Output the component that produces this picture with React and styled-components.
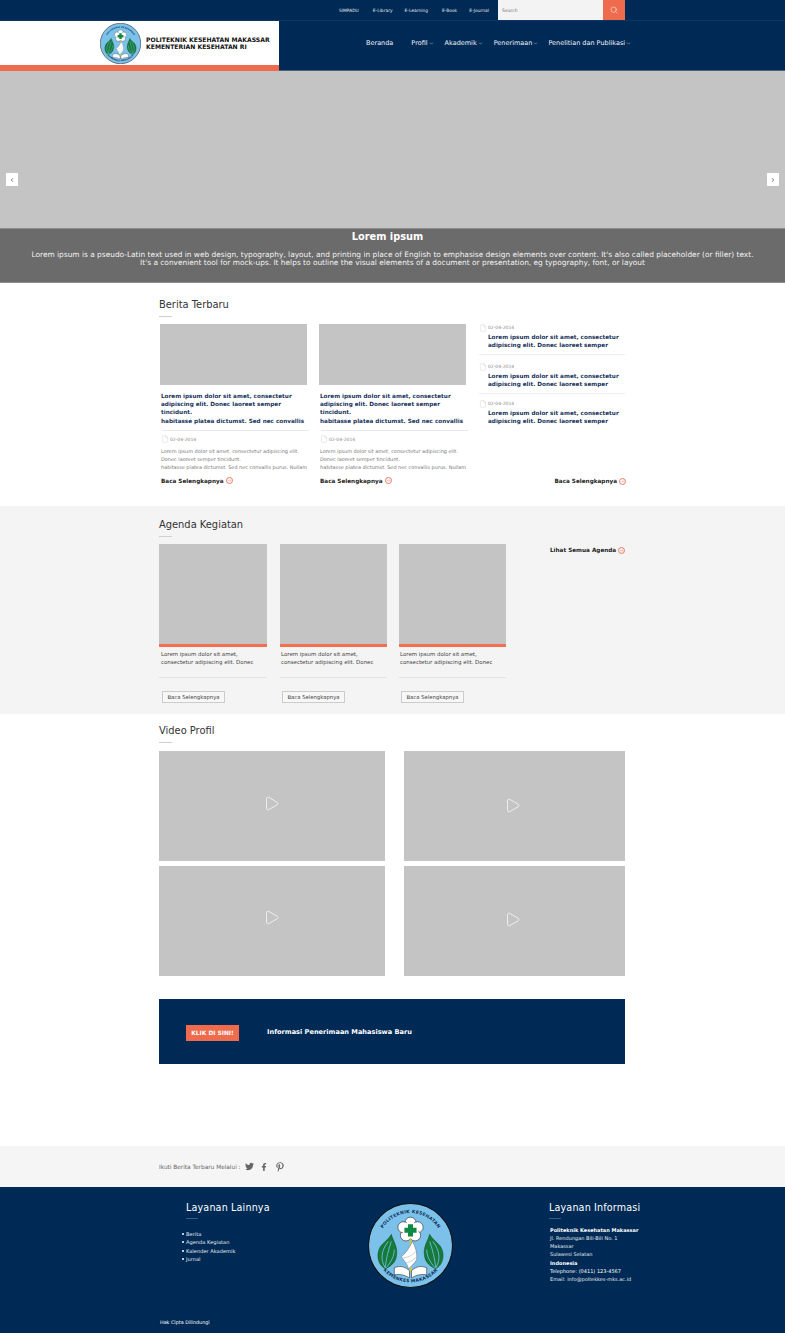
import React from "react";
import styled, { createGlobalStyle } from "styled-components";
import { ChevronDown, ChevronLeft, ChevronRight, Search, Play, File, ArrowRight } from "lucide-react";
import { FaTwitter, FaFacebookF, FaPinterestP } from "react-icons/fa";

const Global = createGlobalStyle`
  html, body { margin: 0; padding: 0; background: #fff; }
  body { font-family: "DejaVu Sans", Verdana, sans-serif; color: #333; }
  * { box-sizing: border-box; }
`;
const NAVY = "#002a56";
const ORANGE = "#ee6b4d";

const Page = styled.div`width: 785px; height: 1333px; overflow: hidden; display: flex; flex-direction: column;`;
const TopBar = styled.div`height: 21px; background: ${NAVY}; border-bottom: 1px solid #0e3560; display: flex; align-items: flex-start; padding-left: 339px;`;
const TopLinks = styled.nav`display: flex; height: 20px; align-items: center; gap: 12px; width: 159px;`;
const TopLink = styled.span`font-size: 4.4px; color: #e4e9ee; white-space: nowrap; &:first-child, &:nth-child(3) { margin-right: 2px; }`;
const SearchBox = styled.div`display: flex; width: 127px; height: 20px;`;
const SearchInput = styled.div`flex: 1; background: #f3f3f3; font-size: 4.6px; color: #777; padding: 8px 0 0 4px;`;
const SearchBtn = styled.div`width: 22px; background: ${ORANGE}; display: flex; align-items: center; justify-content: center; color: #fff;`;

const Header = styled.header`height: 50px; background: ${NAVY}; display: flex;`;
const Brand = styled.div`width: 279px; background: #fff; border-bottom: 6px solid ${ORANGE}; display: flex; align-items: center; padding: 0 0 0 100px; gap: 5px;`;
const BrandText = styled.div`font-size: 6.1px; line-height: 7.4px; font-weight: 700; color: #111; white-space: nowrap;`;
const Nav = styled.nav`flex: 1; display: flex; align-items: flex-start; padding: 18px 0 0 87px; border-bottom: 1px solid #4a5f78;`;
const NavItem = styled.span`font-size: 6.5px; color: #f0f3f6; display: inline-flex; align-items: center; gap: 1px; white-space: nowrap; margin-right: ${p => p.$gap}px;`;

const Hero = styled.section`height: 212px; background: #c4c4c4; display: flex; flex-direction: column;`;
const HeroImage = styled.div`height: 157px; display: flex; justify-content: space-between; align-items: flex-start; padding: 102px 6px 0;`;
const SlideBtn = styled.div`width: 12px; height: 13px; background: #fff; display: flex; align-items: center; justify-content: center; color: #222;`;
const Caption = styled.div`height: 55px; background: #6b6b6b; border-top: 1px solid #8c8c8c; border-bottom: 1px solid #8c8c8c; text-align: center; color: #fff;`;
const CaptionTitle = styled.h3`margin: 0; padding: 1px 10px 0 0; font-size: 9.8px; font-weight: 700; line-height: 13px;`;
const CaptionText = styled.p`margin: 8px 0 0; font-size: 7.42px; line-height: 8px; color: #f2f2f2; white-space: nowrap;`;

const Section = styled.section`height: ${p => p.$h}px; background: ${p => p.$bg || "#fff"}; padding: ${p => p.$pt}px 160px 0 159px; flex: none;`;
const Title = styled.h2`margin: 0; font-size: 9.9px; line-height: 13px; font-weight: 400; color: #333; white-space: nowrap;`;
const Rule = styled.div`width: 13px; height: 1px; background: #cfcfcf; margin-top: 5px;`;

const NewsRow = styled.div`display: flex; margin-top: 7px;`;
const NewsCard = styled.article`width: 159px; padding-left: 1px; flex: none;`;
const GreyImg = styled.div`background: #c4c4c4; width: ${p => p.$w}px; height: ${p => p.$h}px;`;
const NewsHead = styled.h4`margin: 3px 0 0; padding: 4px 0 0 1px; font-size: 5.7px; line-height: 8.2px; color: #17325c; font-weight: 700; white-space: nowrap;`;
const Divider = styled.div`height: 1px; background: #e8e8e8; margin: 5px 0 0 2px; width: 147px;`;
const DateRow = styled.div`display: flex; align-items: center; gap: 1px; margin: 4px 0 0 1px; font-size: 4.5px; color: #888; height: 9px;`;
const Excerpt = styled.p`margin: 3px 0 0 1px; font-size: 4.95px; line-height: 8.3px; color: #777; white-space: nowrap;`;
const More = styled.div`display: flex; align-items: center; gap: 2px; font-size: 5.7px; line-height: 8px; font-weight: 700; color: #222; white-space: nowrap; margin: ${p => p.$m};`;
const MoreIcon = styled.span`width: 7px; height: 7px; border: 1px solid #ee7a60; border-radius: 50%; display: inline-flex; align-items: center; justify-content: center; color: #ee7a60;`;
const SideCol = styled.div`width: 148px; margin-left: 2px; display: flex; flex-direction: column;`;
const SideItem = styled.div`height: ${p => p.$h}px; padding-top: ${p => p.$pt}px; border-bottom: ${p => p.$last ? "none" : "1px solid #eee"};`;
const SideDate = styled(DateRow)`margin: 0; height: 7px;`;
const SideHead = styled.h4`margin: 2px 0 0 9px; font-size: 5.7px; line-height: 8.2px; color: #17325c; font-weight: 700; white-space: nowrap;`;
const SideMore = styled.div`display: flex; justify-content: flex-end; margin: 46px -1px 0 0;`;

const AgendaRow = styled.div`display: flex; margin-top: 7px;`;
const AgendaCard = styled.article`width: ${p => p.$w}px; margin-right: ${p => p.$mr}px; flex: none;`;
const AgendaImg = styled.div`height: 103px; background: #c4c4c4; border-bottom: 3px solid #f07050;`;
const AgendaText = styled.p`margin: 3px 0 0 ${p => p.$in}px; font-size: 5.45px; line-height: 8.3px; color: #444; white-space: nowrap;`;
const AgendaLine = styled.div`height: 1px; background: #e2e2e2; margin-top: 10px;`;
const OutlineBtn = styled.div`display: flex; align-items: center; justify-content: center; width: 63px; height: 12px; margin: 13px 0 0 ${p => p.$in + 1}px; border: 1px solid #ccc; background: #f7f7f7; font-size: 5.3px; color: #444; white-space: nowrap;`;
const SeeAll = styled.div`margin-top: 2px; padding-left: 44px;`;

const VideoGrid = styled.div`display: grid; grid-template-columns: 226px 221px; column-gap: 19px; row-gap: 5px; margin-top: 8px;`;
const Video = styled.div`height: 110px; background: #c4c4c4; display: flex; align-items: center; justify-content: center; color: #fff; padding-right: ${p => p.$pr}px; padding-bottom: ${p => p.$pb}px;`;
const Banner = styled.div`height: 65px; background: ${NAVY}; margin-top: 23px; display: flex; align-items: center; padding-left: 27px;`;
const BannerBtn = styled.div`width: 53px; height: 16px; margin-top: 3px; background: ${ORANGE}; color: #fff; font-size: 5.9px; font-weight: 700; display: flex; align-items: center; justify-content: center; white-space: nowrap;`;
const BannerText = styled.div`margin-left: 28px; font-size: 6.6px; font-weight: 700; color: #fff; white-space: nowrap;`;

const Social = styled.div`height: 41px; background: #f5f5f5; display: flex; align-items: center; padding-left: 159px; gap: 4px; flex: none; margin-top: auto; color: #666;`;
const SocialLabel = styled.span`font-size: 5.8px; color: #666; white-space: nowrap;`;
const SocialFb = styled(FaFacebookF)`margin-left: 2px;`;
const SocialPin = styled(FaPinterestP)`margin-left: 3px;`;

const Footer = styled.footer`height: 146px; background: ${NAVY}; display: flex; flex: none; position: relative; color: #eee;`;
const FootLeft = styled.div`width: 330px; padding: 14px 0 0 186px; flex: none;`;
const FootTitle = styled.h3`margin: 0; font-size: 9.6px; line-height: 13px; font-weight: 400; color: #fff; white-space: nowrap; letter-spacing: .15px;`;
const FootRule = styled.div`width: 12px; height: 1px; background: #3a5a80; margin-top: 4px;`;
const FootList = styled.ul`margin: 11px 0 0; padding: 0; list-style: none; font-size: 5.1px; line-height: 8.3px; color: #e6e9ee;`;
const FootLi = styled.li`white-space: nowrap; display: flex; align-items: center; gap: 2px; margin-left: -4px;`;
const Dot = styled.i`width: 2px; height: 2px; background: #fff; border-radius: 50%; display: block;`;
const FootLogo = styled.div`width: 219px; padding: 16px 0 0 38px; flex: none;`;
const FootRight = styled.div`padding-top: 14px;`;
const Address = styled.div`margin-top: 7px; padding-left: 1px; font-size: 5px; line-height: 8.15px; color: #e3e7ec; white-space: nowrap;`;
const Strong = styled.div`font-weight: ${p => p.$w}; color: #fff;`;
const Copy = styled.div`position: absolute; left: 160px; top: 132px; font-size: 4.85px; color: #fff; white-space: nowrap;`;
const EmblemSvg = styled.svg`display: block; flex: none;`;
const RingText = styled.text`font-family: "DejaVu Sans", sans-serif; font-size: 4.4px; font-weight: 700; fill: #0f2f55; letter-spacing: .25px;`;

const Spray = () => (
  <g>
    <path d="M17 65C8 60 8 47 14 41C18 37 21 35 23 31C25 38 30 44 28 53C27 59 22 63 17 65Z" fill="#157a3a" stroke="#0c4d22" strokeWidth=".5" />
    <path d="M17 64C12 56 13 47 20 38M17 64C18 55 20 47 23 38M18 64C23 58 26 52 26 46" fill="none" stroke="#7cc1ea" strokeWidth=".8" />
  </g>
);

const Emblem = ({ size, id }) => (
  <EmblemSvg width={size} height={size} viewBox="0 0 84 84">
    <circle cx="42" cy="42" r="41.5" fill="#7cc1ea" stroke="#111" />
    <Spray />
    <g transform="translate(84 0) scale(-1 1)"><Spray /></g>
    <g fill="#fff" stroke="#222" strokeWidth=".6">
      <circle cx="42" cy="19.5" r="5.5" />
      <circle cx="49" cy="24" r="5.5" />
      <circle cx="46.5" cy="32" r="5.5" />
      <circle cx="37.5" cy="32" r="5.5" />
      <circle cx="35" cy="24" r="5.5" />
    </g>
    <circle cx="42" cy="27" r="8" fill="#fff" />
    <path d="M39.5 21h5v3.5H48v5h-3.5V33h-5v-3.5H36v-5h3.5z" fill="#0f8a45" />
    <path d="M41.2 35h1.6v34h-1.6z" fill="#e0c52c" />
    <path d="M44 38C47 44 49 50 48 56C46 60 42 63 40 65C39 60 36 58 33 53C37 50 41 44 44 38Z" fill="#fff" stroke="#667" strokeWidth=".5" />
    <path d="M35 54C39 54 44 52 47 48M38 59C42 58 46 56 48 53" fill="none" stroke="#9aa" strokeWidth=".5" />
    <path d="M26 64C33 61 38 64 41 67V74C36 71 31 70 26 71ZM58 64C51 61 46 64 43 67V74C48 71 53 70 58 71Z" fill="#fff" stroke="#333" strokeWidth=".6" />
    <path id={`top-${id}`} d="M11 34A32 32 0 0 1 73 34" fill="none" />
    <path id={`bot-${id}`} d="M8 55A36.4 36.4 0 0 0 76 55" fill="none" />
    <RingText textAnchor="middle"><textPath href={`#top-${id}`} startOffset="50%">POLITEKNIK KESEHATAN</textPath></RingText>
    <RingText textAnchor="middle"><textPath href={`#bot-${id}`} startOffset="50%">KEMENKES MAKASSAR</textPath></RingText>
  </EmblemSvg>
);

const Doc = () => <File size={8} strokeWidth={0.9} color="#bbb" />;
const Arrow = () => <MoreIcon><ArrowRight size={5} strokeWidth={1.6} /></MoreIcon>;
const Caret = () => <ChevronDown size={5} strokeWidth={2} />;

const News = () => (
  <NewsCard>
    <GreyImg $w={147} $h={61} />
    <NewsHead>Lorem ipsum dolor sit amet, consectetur<br />adipiscing elit. Donec laoreet semper<br />tincidunt.<br />habitasse platea dictumst. Sed nec convallis</NewsHead>
    <Divider />
    <DateRow><Doc />02-04-2014</DateRow>
    <Excerpt>Lorem ipsum dolor sit amet, consectetur adipiscing elit.<br />Donec laoreet semper tincidunt.<br />habitasse platea dictumst. Sed nec convallis purus. Nullam</Excerpt>
    <More $m="5px 0 0 1px">Baca Selengkapnya <Arrow /></More>
  </NewsCard>
);
const Side = ({ h, pt, last }) => (
  <SideItem $h={h} $pt={pt} $last={last}>
    <SideDate><Doc />02-04-2014</SideDate>
    <SideHead>Lorem ipsum dolor sit amet, consectetur<br />adipiscing elit. Donec laoreet semper</SideHead>
  </SideItem>
);
const Agenda = ({ w, mr, inset }) => (
  <AgendaCard $w={w} $mr={mr}>
    <AgendaImg />
    <AgendaText $in={inset}>Lorem ipsum dolor sit amet,<br />consectetur adipiscing elit. Donec</AgendaText>
    <AgendaLine />
    <OutlineBtn $in={inset}>Baca Selengkapnya</OutlineBtn>
  </AgendaCard>
);

export default function App() {
  return (
    <Page>
      <Global />
      <TopBar>
        <TopLinks>
          <TopLink>SIMPADU</TopLink><TopLink>E-Library</TopLink><TopLink>E-Learning</TopLink><TopLink>E-Book</TopLink><TopLink>E-Journal</TopLink>
        </TopLinks>
        <SearchBox>
          <SearchInput>Search</SearchInput>
          <SearchBtn><Search size={8} strokeWidth={1.5} /></SearchBtn>
        </SearchBox>
      </TopBar>
      <Header>
        <Brand>
          <Emblem size={41} id="small" />
          <BrandText>POLITEKNIK KESEHATAN MAKASSAR<br />KEMENTERIAN KESEHATAN RI</BrandText>
        </Brand>
        <Nav>
          <NavItem $gap={18}>Beranda</NavItem>
          <NavItem $gap={11}>Profil<Caret /></NavItem>
          <NavItem $gap={11}>Akademik<Caret /></NavItem>
          <NavItem $gap={10}>Penerimaan<Caret /></NavItem>
          <NavItem $gap={0}>Penelitian dan Publikasi<Caret /></NavItem>
        </Nav>
      </Header>
      <Hero>
        <HeroImage>
          <SlideBtn><ChevronLeft size={6} strokeWidth={2.4} /></SlideBtn>
          <SlideBtn><ChevronRight size={6} strokeWidth={2.4} /></SlideBtn>
        </HeroImage>
        <Caption>
          <CaptionTitle>Lorem ipsum</CaptionTitle>
          <CaptionText>Lorem ipsum is a pseudo-Latin text used in web design, typography, layout, and printing in place of English to emphasise design elements over content. It's also called placeholder (or filler) text.<br />It's a convenient tool for mock-ups. It helps to outline the visual elements of a document or presentation, eg typography, font, or layout</CaptionText>
        </Caption>
      </Hero>

      <Section $h={223} $pt={15}>
        <Title>Berita Terbaru</Title>
        <Rule />
        <NewsRow>
          <News />
          <News />
          <SideCol>
            <Side h={31} pt={0} />
            <Side h={39} pt={8} />
            <Side h={37} pt={6} last />
            <SideMore><More $m="0">Baca Selengkapnya <Arrow /></More></SideMore>
          </SideCol>
        </NewsRow>
      </Section>

      <Section $h={208} $pt={12} $bg="#f4f4f4">
        <Title>Agenda Kegiatan</Title>
        <Rule />
        <AgendaRow>
          <Agenda w={108} mr={13} inset={2} />
          <Agenda w={107} mr={12} inset={1} />
          <Agenda w={107} mr={0} inset={1} />
          <SeeAll><More $m="0">Lihat Semua Agenda <Arrow /></More></SeeAll>
        </AgendaRow>
      </Section>

      <Section $h={432} $pt={10}>
        <Title>Video Profil</Title>
        <Rule />
        <VideoGrid>
          <Video $pr={2} $pb={6}><Play size={17} strokeWidth={1} /></Video>
          <Video $pr={5} $pb={2}><Play size={17} strokeWidth={1} /></Video>
          <Video $pr={2} $pb={8}><Play size={17} strokeWidth={1} /></Video>
          <Video $pr={5} $pb={4}><Play size={17} strokeWidth={1} /></Video>
        </VideoGrid>
        <Banner>
          <BannerBtn>KLIK DI SINI!</BannerBtn>
          <BannerText>Informasi Penerimaan Mahasiswa Baru</BannerText>
        </Banner>
      </Section>

      <Social>
        <SocialLabel>Ikuti Berita Terbaru Melalui :</SocialLabel>
        <FaTwitter size={9} />
        <SocialFb size={8} />
        <SocialPin size={10} />
      </Social>
      <Footer>
        <FootLeft>
          <FootTitle>Layanan Lainnya</FootTitle>
          <FootRule />
          <FootList>
            <FootLi><Dot />Berita</FootLi>
            <FootLi><Dot />Agenda Kegiatan</FootLi>
            <FootLi><Dot />Kalender Akademik</FootLi>
            <FootLi><Dot />Jurnal</FootLi>
          </FootList>
        </FootLeft>
        <FootLogo><Emblem size={85} id="big" /></FootLogo>
        <FootRight>
          <FootTitle>Layanan Informasi</FootTitle>
          <FootRule />
          <Address>
            <Strong $w={700}>Politeknik Kesehatan Makassar</Strong>
            Jl. Rendungan Bili-Bili No. 1<br />Makassar<br />Sulawesi Selatan
            <Strong $w={700}>Indonesia</Strong>
            <Strong $w={400}>Telephone: (0411) 123-4567</Strong>
            Email: info@poltekkes-mks.ac.id
          </Address>
        </FootRight>
        <Copy>Hak Cipta Dilindungi</Copy>
      </Footer>
    </Page>
  );
}
